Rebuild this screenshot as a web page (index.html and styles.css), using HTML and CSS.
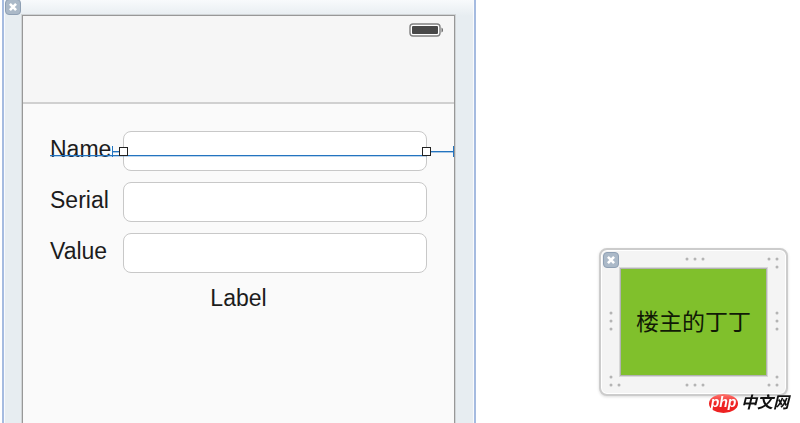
FILE: index.html
```
<!DOCTYPE html>
<html lang="zh">
  <head>
    <title>Interface canvas</title>
    <meta charset="UTF-8">
    <link rel="stylesheet" href="styles.css">
  </head>

  <body>
	<main class="canvas">
		<section class="scene">
			<button type="button" class="close" aria-label="Close scene">
				<svg viewBox="0 0 16 16"><path d="M4.5 4.5 L11.5 11.5 M11.5 4.5 L4.5 11.5"/></svg>
			</button>
			<div class="screen">
				<header class="navbar">
					<svg class="battery" width="35" height="14" viewBox="0 0 35 14">
						<rect x="1" y="1" width="30" height="12" rx="3" fill="#fff" stroke="#808080" stroke-width="1.4"/>
						<rect x="3" y="3" width="26" height="8" rx="1" fill="#484848"/>
						<path d="M32.5 4.5 Q34 5 34 7 Q34 9 32.5 9.5 Z" fill="#666"/>
					</svg>
				</header>
				<form class="form">
					<div class="row">
						<label for="name">Name</label>
						<div class="field">
							<input type="text" id="name">
							<span class="baseline"></span>
							<span class="spacer spacer-left"></span>
							<span class="spacer spacer-right"></span>
							<span class="handle handle-left"></span>
							<span class="handle handle-right"></span>
						</div>
					</div>
					<div class="row">
						<label for="serial">Serial</label>
						<div class="field"><input type="text" id="serial"></div>
					</div>
					<div class="row">
						<label for="value">Value</label>
						<div class="field"><input type="text" id="value"></div>
					</div>
					<output class="result">Label</output>
				</form>
			</div>
		</section>

		<section class="panel">
			<button type="button" class="close" aria-label="Close view">
				<svg viewBox="0 0 16 16"><path d="M4.5 4.5 L11.5 11.5 M11.5 4.5 L4.5 11.5"/></svg>
			</button>
			<!-- resize grips, three dots each -->
			<svg class="grips" viewBox="0 0 189 148">
				<path d="M88 11h0 M96 11h0 M104 11h0 M170 11h0 M178 11h0 M178 19h0
					M12 65h0 M12 73h0 M12 81h0 M178 65h0 M178 73h0 M178 81h0
					M12 129h0 M12 137h0 M20 137h0 M88 137h0 M96 137h0 M104 137h0
					M178 129h0 M170 137h0 M178 137h0"/>
			</svg>
			<div class="view">楼主的丁丁</div>
		</section>
	</main>

	<div class="watermark">
		<span class="badge">php</span>
		<span class="site">中文网</span>
	</div>
  </body>
</html>
```
FILE: styles.css
```
* {box-sizing: border-box;}
body {
	margin: 0;
	background: #fff;
	color: #1c1c1c;
	font-family: "Liberation Sans", "Noto Sans CJK SC", sans-serif;
	font-size: 23px;
	line-height: 26px;
}
.canvas {
	display: flex;
	gap: 123px;
	height: 100vh;
	padding: 0 12px 0 2px;
	overflow: hidden;
}

/* scene with the phone screen */
.scene {
	position: relative;
	display: flex;
	flex: 1;
	min-width: 0;
	padding: 15px 19px 0 18px;
	border: solid #a5bbe0;
	border-width: 0 2px;
	background: linear-gradient(#f8fafc, #e7edf1 16px);
	box-shadow: inset 1px 0 #f8fafc, inset -1px 0 #f8fafc;
}
.screen {
	flex: 1;
	min-width: 0;
	border: 1px solid #989898;
	border-bottom: none;
	background: #fafafa;
	box-shadow: 0 0 0 1px #d0d4d6;
}
.navbar {
	display: flex;
	justify-content: flex-end;
	height: 88px;
	padding: 7px 10px 0;
	border-bottom: 2px solid #d0d0d0;
	background: #f6f6f6;
}
.battery {display: block;}
.form {
	display: flex;
	flex-direction: column;
	gap: 11px;
	padding: 27px;
}
.row {
	display: grid;
	grid-template-columns: 73px 1fr;
	align-items: center;
}
.row label {padding-bottom: 5px;}
.field {position: relative;}
.field input {
	display: block;
	width: 100%;
	height: 40px;
	padding: 0 10px;
	border: 1px solid #c8c8c8;
	border-radius: 8px;
	background: #fff;
	font: inherit;
}
.result {
	padding-top: 1px;
	text-align: center;
}

/* layout guides over the selected field */
.baseline {
	position: absolute;
	top: 24px;
	left: -73px;
	right: 0;
	height: 1px;
	background: #2374c0;
	box-shadow: 0 1px rgba(35, 116, 192, 0.3);
}
.spacer {
	position: absolute;
	top: 15px;
	height: 11px;
	background: linear-gradient(#2374c0 50%, #a8c8e6 50%) center / 100% 2px no-repeat;
}
.spacer-left {
	left: -11px;
	width: 8px;
	border-left: 1px solid #2374c0;
}
.spacer-right {
	left: 100%;
	width: 27px;
	border-right: 1px solid #2374c0;
}
.handle {
	position: absolute;
	top: 16px;
	width: 9px;
	height: 9px;
	border: 1px solid #222;
	background: #fff;
}
.handle-left {left: -4px;}
.handle-right {right: -4px;}

.close {
	position: absolute;
	width: 16px;
	height: 16px;
	padding: 0;
	border: 1px solid #8fa0b4;
	border-radius: 4px;
	background: #abb9c8;
}
.close svg {
	display: block;
	width: 100%;
	height: 100%;
	fill: none;
	stroke: #fff;
	stroke-width: 3;
}
.scene .close {
	top: -1px;
	left: 1px;
}
.panel .close {
	top: 2px;
	left: 2px;
}

/* floating custom view */
.panel {
	position: relative;
	flex: none;
	align-self: flex-start;
	width: 189px;
	margin-top: 248px;
	padding: 18px 19px;
	border: 2px solid #ccc;
	border-radius: 8px;
	background: #f4f4f4;
	box-shadow: inset 0 0 0 1px #fff, 0 1px 3px #ddd;
}
.grips {
	position: absolute;
	top: -2px;
	left: -2px;
	width: 189px;
	height: 148px;
	fill: none;
	stroke: #b4b4b4;
	stroke-width: 3;
	stroke-linecap: round;
	pointer-events: none;
}
.view {
	display: flex;
	align-items: center;
	justify-content: center;
	height: 108px;
	border: 1px solid #b2b2b2;
	background: #80c02c;
	box-shadow: 0 0 0 1px #d8d8d8;
	color: #111a06;
}

.watermark {
	position: fixed;
	right: 11px;
	bottom: 10px;
	display: flex;
	align-items: center;
	gap: 3px;
	color: #111;
	font-size: 16px;
	font-style: italic;
	line-height: 20px;
}
.badge {
	width: 29px;
	height: 19px;
	border-radius: 50%;
	background: linear-gradient(#ff7770, #ee2222 50%);
	color: #fff;
	font-size: 14px;
	font-weight: bold;
	line-height: 17px;
	text-align: center;
}
.site {font-weight: bold;}
```
